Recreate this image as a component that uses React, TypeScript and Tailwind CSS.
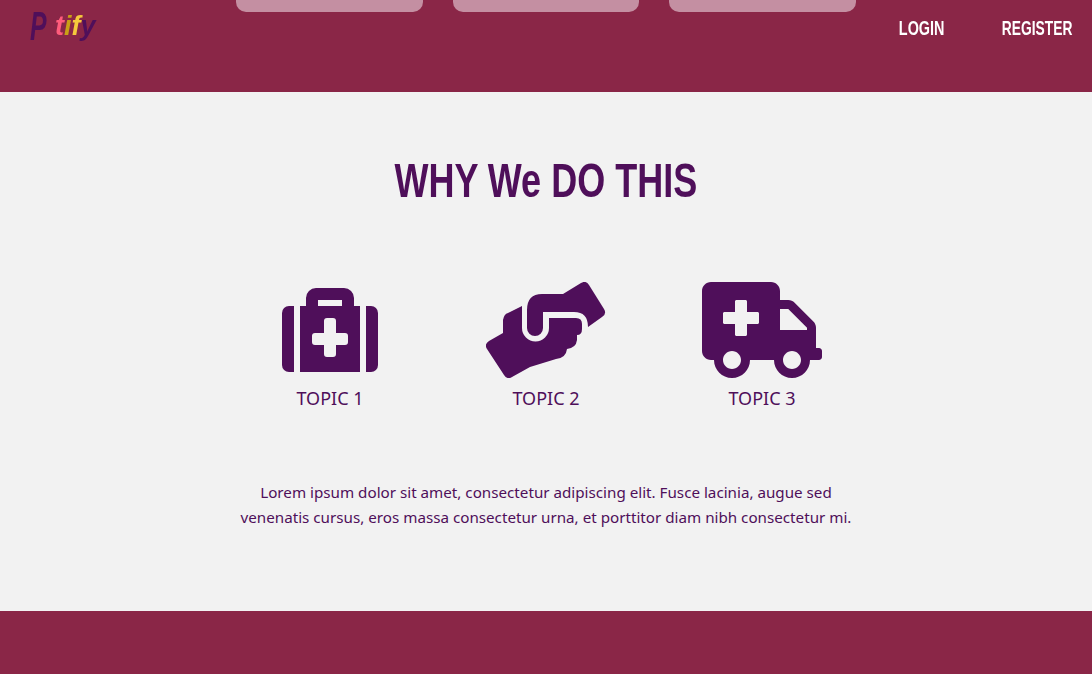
import { FaAmbulance } from 'react-icons/fa';

function BriefcaseIcon() {
  return (
    <svg width="96" height="96" viewBox="22 12 96 96" fill="currentColor">
      <path d="M34 36v66h-5a7 7 0 0 1-7-7V43a7 7 0 0 1 7-7z" />
      <path d="M106 36h5a7 7 0 0 1 7 7v52a7 7 0 0 1-7 7h-5z" />
      <path
        fillRule="evenodd"
        d="M46 36v-8a10 10 0 0 1 10-10h28a10 10 0 0 1 10 10v8h6v66H40V36zM58 30v6h24v-6zM64 51v12H55a3 3 0 0 0-3 3v6a3 3 0 0 0 3 3h9v9a3 3 0 0 0 3 3h6a3 3 0 0 0 3-3v-9h9a3 3 0 0 0 3-3v-6a3 3 0 0 0-3-3h-9V51a3 3 0 0 0-3-3h-6a3 3 0 0 0-3 3z"
      />
    </svg>
  );
}

function HandsIcon() {
  return (
    <svg width="120" height="96" viewBox="16 12 120 96" fill="currentColor">
      <path d="M57 60V40Q57 24 72 24H93L111 13Q116 10 119 15L134 39Q137 44 132 47L118 57Q118 42 104 42H73V58A8 8 0 0 1 57 58z" />
      <path d="M52 36V58A13.5 13.5 0 0 0 79 58V48H106Q112 48 112 54V59Q112 65 107 65V70Q106 78 97 79Q96 88 86 89L60 97L42 107Q37 110 34 105L17 79Q14 74 19 71L33 63V50Q34 44 38 43z" />
    </svg>
  );
}

function Topic({ icon, label }: { icon: React.ReactNode; label: string }) {
  return (
    <div className="flex w-[216px] flex-col items-center">
      <div className="flex h-24 items-center justify-center">{icon}</div>
      <p className="mt-[6px] text-[18px] leading-7">{label}</p>
    </div>
  );
}

export default function App() {
  return (
    <div className="min-h-[674px] bg-[#f2f2f2] font-['Noto_Sans',sans-serif] text-[#4f0f5a]">
      {/* Nav */}
      <header className="flex h-[92px] bg-[#8a2647]">
        <div className="w-[236px] shrink-0 pl-[30px] pt-[6px]">
          <div className="flex items-start font-['Liberation_Sans',sans-serif] font-bold italic blur-[0.4px]">
            <span className="inline-block w-[25px] origin-left scale-x-[0.62] text-[40px] leading-[40px]">P</span>
            <div className="mt-[4px] text-[27px] leading-8">
              <span className="text-[#ff5c7c]">t</span>
              <span className="text-[#c9a016]">i</span>
              <span className="text-[#f5c93c]">f</span>
              <span>y</span>
            </div>
          </div>
        </div>
        <div className="flex h-3 gap-[30px]">
          <div className="w-[187px] rounded-b-[10px] bg-[#c48fa2]" />
          <div className="w-[186px] rounded-b-[10px] bg-[#c48fa2]" />
          <div className="w-[187px] rounded-b-[10px] bg-[#c48fa2]" />
        </div>
        <nav className="ml-auto flex h-14 items-center gap-[57px] pr-5 font-['Liberation_Sans',sans-serif] text-[20px] font-bold text-white">
          <a className="flex w-[46px] justify-center whitespace-nowrap">
            <span className="inline-block scale-x-[0.72]">LOGIN</span>
          </a>
          <a className="flex w-[70px] justify-center whitespace-nowrap">
            <span className="inline-block scale-x-[0.69]">REGISTER</span>
          </a>
        </nav>
      </header>

      {/* Why */}
      <main className="flex h-[519px] flex-col items-center">
        <h1 className="mt-[61px] h-[56px] scale-x-[0.75] whitespace-nowrap font-['Liberation_Sans',sans-serif] text-[48px] font-bold leading-[56px]">
          WHY We DO THIS
        </h1>
        <div className="mt-[73px] flex">
          <Topic icon={<BriefcaseIcon />} label="TOPIC 1" />
          <Topic icon={<HandsIcon />} label="TOPIC 2" />
          <Topic icon={<FaAmbulance size={120} className="h-24 w-[120px]" />} label="TOPIC 3" />
        </div>
        <p className="mt-[68px] w-[620px] text-center text-[15.2px] leading-[25px]">
          Lorem ipsum dolor sit amet, consectetur adipiscing elit. Fusce lacinia, augue sed venenatis cursus, eros massa consectetur urna, et porttitor diam nibh consectetur mi.
        </p>
      </main>

      <footer className="h-[63px] bg-[#8a2647]" />
    </div>
  );
}
